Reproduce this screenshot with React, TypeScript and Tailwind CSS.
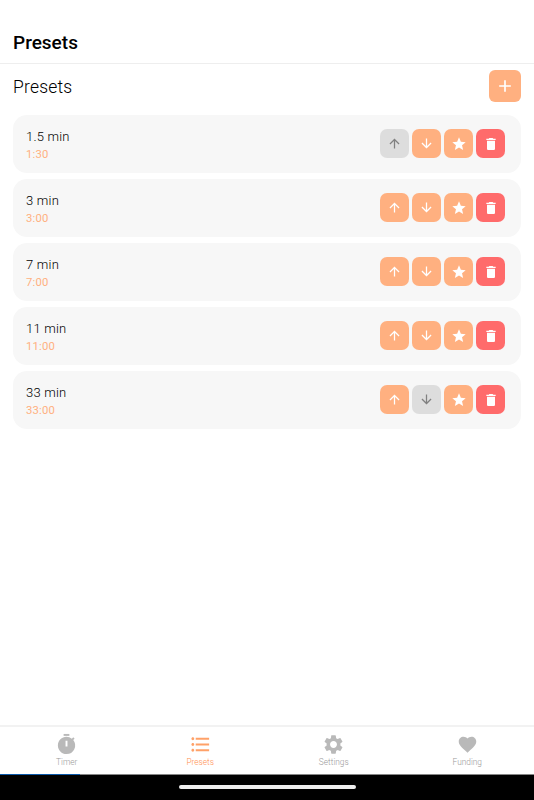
import type { ReactNode } from 'react';
import { MdAdd, MdArrowUpward, MdArrowDownward, MdStar, MdSettings, MdFavorite, MdFormatListBulleted } from 'react-icons/md';

const presets = [
  { name: '1.5 min', time: '1:30' },
  { name: '3 min', time: '3:00' },
  { name: '7 min', time: '7:00' },
  { name: '11 min', time: '11:00' },
  { name: '33 min', time: '33:00' },
];

function ActionButton({ label, tone, children }: { label: string; tone: string; children: ReactNode }) {
  return (
    <button aria-label={label} className={`flex size-[29px] items-center justify-center rounded-[7px] ${tone}`}>
      {children}
    </button>
  );
}

const orange = 'bg-[#ffb080] text-white';
const disabled = 'bg-[#dddddd] text-[#808080]';

function TrashIcon() {
  return (
    <svg viewBox="0 0 24 24" className="size-4" fill="currentColor">
      <path d="M6 7V19c0 1.1.9 2 2 2h8c1.1 0 2-.9 2-2V7H6zM19 4h-3.5l-1-1h-5l-1 1H5v2h14V4z" />
    </svg>
  );
}

function PresetCard({ name, time, first, last }: { name: string; time: string; first: boolean; last: boolean }) {
  return (
    <li className="flex h-[58px] items-center justify-between rounded-[14px] bg-[#f7f7f7] pr-4 pl-[13px]">
      <div className="pt-[3px]">
        <div className="text-[13px] leading-[17px] font-light tracking-[0.2px] text-black">{name}</div>
        <div className="pt-px text-[11.3px] leading-[17px] tracking-[0.15px] text-[#ffb080]">{time}</div>
      </div>
      <div className="flex gap-[3px] pb-px">
        <ActionButton label="Move up" tone={first ? disabled : orange}><MdArrowUpward size={15} /></ActionButton>
        <ActionButton label="Move down" tone={last ? disabled : orange}><MdArrowDownward size={15} /></ActionButton>
        <ActionButton label="Favourite" tone={orange}><MdStar size={16} /></ActionButton>
        <ActionButton label="Delete" tone="bg-[#ff6b6b] text-white"><TrashIcon /></ActionButton>
      </div>
    </li>
  );
}

function TimerIcon() {
  return (
    <svg viewBox="0 0 24 24" className="size-[23px]" fill="currentColor">
      <path d="M9 1h6v2H9z" />
      <path d="m19.03 7.39 1.42-1.42c-.43-.51-.9-.99-1.41-1.41l-1.42 1.42A8.962 8.962 0 0 0 12 4c-4.97 0-9 4.03-9 9s4.02 9 9 9a8.994 8.994 0 0 0 7.03-14.61zM13 14h-2V8h2v6z" />
    </svg>
  );
}

function Tab({ label, active, children }: { label: string; active?: boolean; children: ReactNode }) {
  return (
    <a className={`flex flex-1 flex-col items-center pt-[5px] ${active ? 'text-[#ffa168]' : 'text-[#b9b9b9]'}`}>
      <span className="flex h-6 items-center justify-center">{children}</span>
      <span className={`pt-px text-[8.3px] leading-[10px] font-light ${active ? 'text-[#ff8f50]' : 'text-[#999999]'}`}>{label}</span>
    </a>
  );
}

export default function App() {
  return (
    <div className="flex h-[800px] w-[534px] flex-col bg-white font-['Roboto',sans-serif]">
      <header className="flex h-16 items-end border-b border-[#eeeeee] pb-2 pl-[13px]">
        <h1 className="text-[19px] leading-6 font-medium text-black">Presets</h1>
      </header>
      <main className="flex-1 px-[13px] pt-[6px]">
        <div className="flex h-[33px] items-start justify-between">
          <h2 className="pt-px text-[17.5px] leading-8 font-light tracking-[0.2px] text-black">Presets</h2>
          <button aria-label="Add preset" className="flex size-8 items-center justify-center rounded-[6px] bg-[#ffb080] text-white">
            <MdAdd size={20} />
          </button>
        </div>
        <ul className="mt-3 flex flex-col gap-[6px]">
          {presets.map((p, i) => (
            <PresetCard key={p.name} {...p} first={i === 0} last={i === presets.length - 1} />
          ))}
        </ul>
      </main>
      <nav className="flex h-[49px] border-t-2 border-[#f2f2f2]">
        <Tab label="Timer"><TimerIcon /></Tab>
        <Tab label="Presets" active><MdFormatListBulleted size={23} /></Tab>
        <Tab label="Settings"><MdSettings size={23} /></Tab>
        <Tab label="Funding"><MdFavorite size={21} /></Tab>
      </nav>
      <footer className="flex h-[26px] flex-col items-center bg-black">
        <div className="flex h-px w-full bg-[#858585]"><div className="w-20 bg-[#0a58a8]" /></div>
        <div className="mt-[10px] h-1 w-[177px] rounded-full bg-[#eeeeee]" />
      </footer>
    </div>
  );
}
